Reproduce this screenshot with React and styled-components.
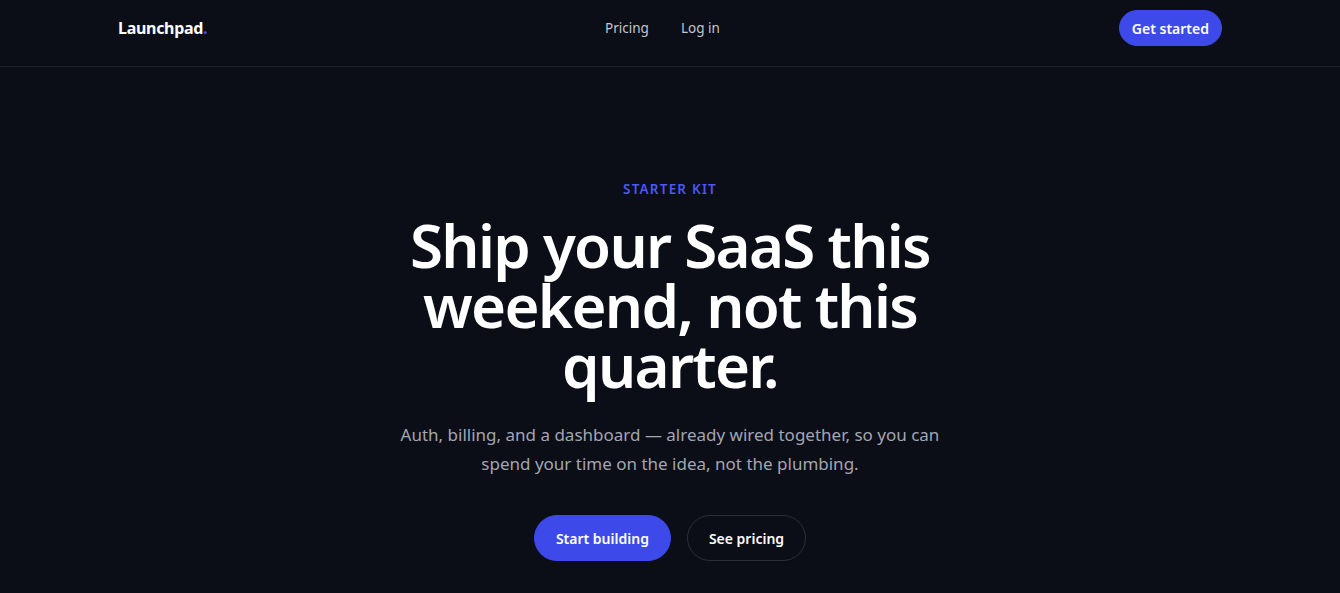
import React from "react";
import styled, { createGlobalStyle } from "styled-components";

const Global = createGlobalStyle`
  * { box-sizing: border-box; }
  html, body { margin: 0; padding: 0; background: #0b0d17; }
  body {
    font-family: "Noto Sans", "Open Sans", "Liberation Sans", sans-serif;
    color: #ffffff;
    -webkit-font-smoothing: antialiased;
  }
`;

const Page = styled.div`
  min-height: 593px;
  background: #0b0d17;
`;

const Header = styled.header`
  padding-bottom: 10px;
  border-bottom: 1px solid #1e2130;
`;

const Nav = styled.nav`
  max-width: 1152px;
  margin: 0 auto;
  padding: 0 24px;
  height: 56px;
  display: flex;
  align-items: center;
  justify-content: space-between;
`;

const Logo = styled.a`
  font-size: 16px;
  font-weight: 700;
  color: #ffffff;
  letter-spacing: -0.3px;
  text-decoration: none;
  width: 88px;
  span { color: #4451f0; }
`;

const Links = styled.div`
  display: flex;
  gap: 32px;
`;

const NavLink = styled.a`
  font-size: 13.5px;
  color: #c3c6cf;
  text-decoration: none;
`;

const Button = styled.a`
  display: inline-flex;
  align-items: center;
  justify-content: center;
  height: ${(p) => (p.$size === "lg" ? "46px" : "36px")};
  padding: 0 ${(p) => (p.$size === "lg" ? "21px" : "12px")};
  border-radius: 999px;
  font-size: 14px;
  font-weight: 600;
  color: #ffffff;
  text-decoration: none;
  background: ${(p) => (p.$variant === "ghost" ? "transparent" : "#3d4ae9")};
  border: 1px solid ${(p) => (p.$variant === "ghost" ? "#2b2e3b" : "#3d4ae9")};
`;

const Hero = styled.main`
  display: flex;
  flex-direction: column;
  align-items: center;
  text-align: center;
  padding-top: 113px;
`;

const Eyebrow = styled.div`
  font-size: 13.5px;
  font-weight: 600;
  letter-spacing: 1.2px;
  color: #4b58f4;
  text-transform: uppercase;
`;

const Title = styled.h1`
  margin: 17px 0 0;
  max-width: 560px;
  font-size: 60px;
  line-height: 60px;
  font-weight: 600;
  letter-spacing: -1.7px;
  color: #ffffff;
`;

const Lead = styled.p`
  margin: 25px 0 0;
  max-width: 590px;
  font-size: 17px;
  line-height: 29px;
  color: #a3a6b0;
`;

const Actions = styled.div`
  margin-top: 37px;
  display: flex;
  gap: 16px;
`;

export default function App() {
  return (
    <Page>
      <Global />
      <Header>
        <Nav>
          <Logo href="#">
            Launchpad<span>.</span>
          </Logo>
          <Links>
            <NavLink href="#">Pricing</NavLink>
            <NavLink href="#">Log in</NavLink>
          </Links>
          <Button href="#">Get started</Button>
        </Nav>
      </Header>
      <Hero>
        <Eyebrow>Starter kit</Eyebrow>
        <Title>Ship your SaaS this weekend, not this quarter.</Title>
        <Lead>
          Auth, billing, and a dashboard — already wired together, so you can
          spend your time on the idea, not the plumbing.
        </Lead>
        <Actions>
          <Button href="#" $size="lg">Start building</Button>
          <Button href="#" $size="lg" $variant="ghost">See pricing</Button>
        </Actions>
      </Hero>
    </Page>
  );
}
